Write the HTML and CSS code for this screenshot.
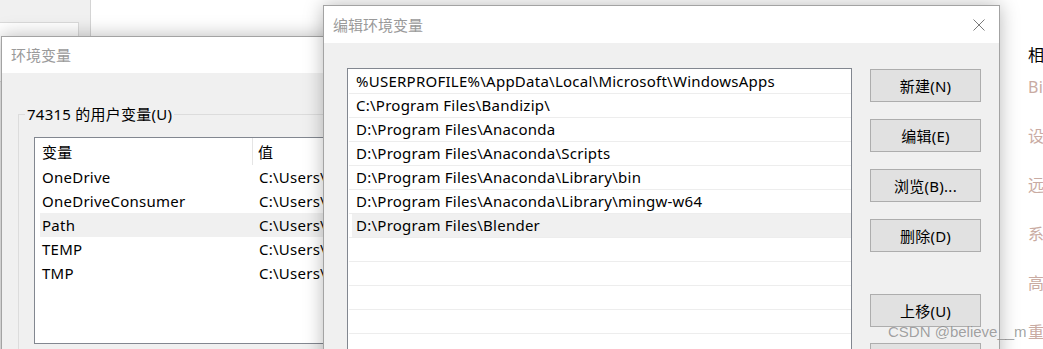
FILE: index.html
```html
<!DOCTYPE html>
<html>
<head>
  <link rel="stylesheet" href="styles.css">
</head>
<body>
  <div class="desk">
    <div class="back-pane">
      <div class="back-box"></div>
    </div>

    <div class="side-menu">
      <div class="side-head">相</div>
      <ul class="side-items">
        <li>Bi</li>
        <li>设</li>
        <li>远</li>
        <li>系</li>
        <li>高</li>
        <li>重</li>
      </ul>
    </div>

    <section class="win win-env">
      <header class="title">环境变量</header>
      <div class="env-body">
        <fieldset class="group">
          <legend>74315 的用户变量(U)</legend>
          <div class="listview">
            <div class="lv-row lv-head">
              <span class="col-name">变量</span>
              <span class="col-val">值</span>
            </div>
            <div class="lv-row"><span class="col-name">OneDrive</span><span class="col-val">C:\Users\</span></div>
            <div class="lv-row"><span class="col-name">OneDriveConsumer</span><span class="col-val">C:\Users\</span></div>
            <div class="lv-row selected"><span class="col-name">Path</span><span class="col-val">C:\Users\</span></div>
            <div class="lv-row"><span class="col-name">TEMP</span><span class="col-val">C:\Users\</span></div>
            <div class="lv-row"><span class="col-name">TMP</span><span class="col-val">C:\Users\</span></div>
          </div>
        </fieldset>
      </div>
    </section>

    <section class="win win-edit">
      <header class="title">
        编辑环境变量
        <svg class="close" width="12" height="12" viewBox="0 0 12 12">
          <path d="M0.5 0.5 L11.5 11.5 M11.5 0.5 L0.5 11.5" stroke="#7a7a7a" stroke-width="1" fill="none"/>
        </svg>
      </header>
      <div class="edit-body">
        <ul class="pathlist">
          <li><div class="item">%USERPROFILE%\AppData\Local\Microsoft\WindowsApps</div></li>
          <li><div class="item">C:\Program Files\Bandizip\</div></li>
          <li><div class="item">D:\Program Files\Anaconda</div></li>
          <li><div class="item">D:\Program Files\Anaconda\Scripts</div></li>
          <li><div class="item">D:\Program Files\Anaconda\Library\bin</div></li>
          <li><div class="item">D:\Program Files\Anaconda\Library\mingw-w64</div></li>
          <li class="selected"><div class="item">D:\Program Files\Blender</div></li>
          <li><div class="item"></div></li>
          <li><div class="item"></div></li>
          <li><div class="item"></div></li>
          <li><div class="item"></div></li>
          <li><div class="item"></div></li>
        </ul>
        <div class="buttons">
          <button class="btn">新建(N)</button>
          <button class="btn">编辑(E)</button>
          <button class="btn">浏览(B)...</button>
          <button class="btn">删除(D)</button>
          <button class="btn btn-gap">上移(U)</button>
          <button class="btn btn-last"></button>
        </div>
      </div>
    </section>

    <div class="watermark">CSDN @believe__m</div>
  </div>
</body>
</html>
```

FILE: styles.css
```css
* {
  box-sizing: border-box;
  margin: 0;
  padding: 0;
}

body {
  background-color: #fff;
  font-family: "Noto Sans", "Noto Sans CJK SC", sans-serif;
  font-size: 15px;
  letter-spacing: 0.25px;
  color: #000;
}

.desk {
  position: relative;
  width: 1043px;
  height: 349px;
  overflow: hidden;
  background-color: #fff;
}

/* windows behind */
.back-pane {
  position: absolute;
  left: 0;
  top: 0;
  width: 91px;
  height: 349px;
  background-color: #f0f0f0;
  border-right: 1px solid #d4d4d4;
}

.back-box {
  margin-top: 22px;
  width: 79px;
  height: 60px;
  background-color: #fff;
  border: 1px solid #dadada;
  border-left: none;
}

.side-menu {
  position: absolute;
  left: 1028px;
  top: 44px;
  font-size: 16px;
  line-height: 22px;
  white-space: nowrap;
}

.side-head {
  margin-bottom: 10px;
}

.side-items {
  list-style: none;
  display: flex;
  flex-direction: column;
  gap: 27px;
  color: #c9aba2;
}

/* dialog windows */
.win {
  position: absolute;
  display: flex;
  flex-direction: column;
  background-color: #f0f0f0;
  border: 1px solid #a3a3a3;
  box-shadow: 0 0 18px rgba(0, 0, 0, 0.28);
  overflow: hidden;
}

.title {
  display: flex;
  flex-shrink: 0;
  align-items: center;
  justify-content: space-between;
  height: 36px;
  padding-left: 9px;
  background-color: #fff;
  color: #9a9a9a;
  line-height: 20px;
  letter-spacing: 0;
}

.close {
  margin-right: 14px;
}

.win-env {
  left: 1px;
  top: 36px;
  width: 360px;
  height: 340px;
}

.env-body {
  flex-shrink: 0;
  padding: 31px 0 0 16px;
}

.group {
  border: 1px solid #dcdcdc;
  border-right: none;
  padding: 0 0 0 15px;
  height: 280px;
}

.group legend {
  margin-left: -9px;
  padding: 0 2px;
  line-height: 20px;
}

.listview {
  margin-top: 13px;
  width: 400px;
  height: 207px;
  background-color: #fff;
  border: 1px solid #828790;
}

.lv-row {
  display: flex;
  height: 24px;
  line-height: 24px;
  margin-left: 5px;
  white-space: nowrap;
}

.lv-row.lv-head {
  height: 27px;
  line-height: 29px;
}

.lv-row.selected {
  background-color: #f0f0f0;
}

.col-name {
  width: 213px;
  padding-left: 2px;
  flex-shrink: 0;
}

.lv-head .col-name {
  border-right: 1px solid #e5e5e5;
}

.col-val {
  padding-left: 6px;
}

.lv-head .col-val {
  padding-left: 5px;
}

.win-edit {
  left: 323px;
  top: 5px;
  width: 677px;
  height: 370px;
}

.win-edit .title {
  height: 37px;
}

.edit-body {
  display: flex;
  flex-shrink: 0;
  align-items: flex-start;
  padding: 25px 0 0 23px;
}

.pathlist {
  list-style: none;
  width: 505px;
  height: 300px;
  padding-top: 1px;
  background-color: #fff;
  border: 1px solid #828790;
  overflow: hidden;
}

.pathlist li {
  margin-left: 1px;
  padding-left: 3px;
  border-bottom: 1px solid #ededed;
}

.pathlist .item {
  height: 23px;
  padding-left: 4px;
  line-height: 23px;
  white-space: nowrap;
}

.pathlist .selected .item {
  background-color: #f0f0f0;
}

.buttons {
  display: flex;
  flex-direction: column;
  gap: 17px;
  margin-left: 18px;
  padding-top: 1px;
}

.btn {
  width: 111px;
  height: 33px;
  background-color: #e1e1e1;
  border: 1px solid #adadad;
  font-family: inherit;
  font-size: 15px;
  letter-spacing: 0.25px;
  color: #000;
  line-height: 20px;
}

.btn-gap {
  margin-top: 25px;
}

.btn-last {
  margin-top: -1px;
}

.watermark {
  position: absolute;
  left: 888px;
  top: 322px;
  font-family: "Liberation Sans", Arial, sans-serif;
  font-size: 15px;
  letter-spacing: 0;
  line-height: 20px;
  color: rgba(110, 110, 110, 0.65);
  text-shadow: 0 0 1px rgba(255, 255, 255, 0.6);
  white-space: nowrap;
}
```
